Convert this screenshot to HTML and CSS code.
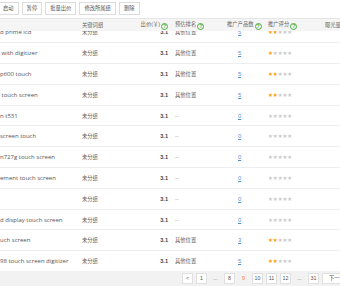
FILE: index.html
```html
<!DOCTYPE html>
<html lang="zh-CN">
<head>
<meta charset="utf-8">
<title>关键词管理</title>
<link rel="stylesheet" href="styles.css">
</head>
<body>
<div class="page">
  <div class="toolbar">
    <span class="btn btn-first">启动</span>
    <span class="btn">暂停</span>
    <span class="btn">批量出价</span>
    <span class="btn">修改所属组</span>
    <span class="btn">删除</span>
  </div>
  <div class="grid thead">
    <div></div>
    <div>关键词组</div>
    <div class="c-bid">出价(￥)<i class="q">?</i></div>
    <div class="c-rank">预估排名<i class="q">?</i></div>
    <div>推广产品数<i class="q">?</i></div>
    <div>推广评分<i class="q">?</i></div>
    <div>曝光量</div>
  </div>
  <div class="tbody">
    <div class="tbody-inner">
      <div class="grid row"><div class="kw">d prime lcd</div><div>未分组</div><div class="c-bid num">3.1</div><div class="c-rank">其他位置</div><div class="c-count"><a>5</a></div><div class="stars"><b>★★</b>★★★</div><div></div></div>
      <div class="grid row"><div class="kw"> with digitizer</div><div>未分组</div><div class="c-bid num">3.1</div><div class="c-rank">其他位置</div><div class="c-count"><a>5</a></div><div class="stars"><b>★</b>★★★★</div><div></div></div>
      <div class="grid row"><div class="kw">p600 touch</div><div>未分组</div><div class="c-bid num">3.1</div><div class="c-rank">其他位置</div><div class="c-count"><a>5</a></div><div class="stars"><b>★★</b>★★★</div><div></div></div>
      <div class="grid row"><div class="kw"> touch screen</div><div>未分组</div><div class="c-bid num">3.1</div><div class="c-rank">其他位置</div><div class="c-count"><a>5</a></div><div class="stars"><b>★★</b>★★★</div><div></div></div>
      <div class="grid row"><div class="kw">n t531</div><div>未分组</div><div class="c-bid num">3.1</div><div class="c-rank dash">--</div><div class="c-count"><a>0</a></div><div class="stars">★★★★★</div><div></div></div>
      <div class="grid row"><div class="kw">screen touch</div><div>未分组</div><div class="c-bid num">3.1</div><div class="c-rank dash">--</div><div class="c-count"><a>0</a></div><div class="stars">★★★★★</div><div></div></div>
      <div class="grid row"><div class="kw">n727g touch screen</div><div>未分组</div><div class="c-bid num">3.1</div><div class="c-rank dash">--</div><div class="c-count"><a>0</a></div><div class="stars">★★★★★</div><div></div></div>
      <div class="grid row"><div class="kw">ement touch screen</div><div>未分组</div><div class="c-bid num">3.1</div><div class="c-rank dash">--</div><div class="c-count"><a>0</a></div><div class="stars">★★★★★</div><div></div></div>
      <div class="grid row"><div class="kw"></div><div>未分组</div><div class="c-bid num">3.1</div><div class="c-rank dash">--</div><div class="c-count"><a>0</a></div><div class="stars">★★★★★</div><div></div></div>
      <div class="grid row"><div class="kw">d display touch screen</div><div>未分组</div><div class="c-bid num">3.1</div><div class="c-rank dash">--</div><div class="c-count"><a>0</a></div><div class="stars">★★★★★</div><div></div></div>
      <div class="grid row"><div class="kw">uch screen</div><div>未分组</div><div class="c-bid num">3.1</div><div class="c-rank">其他位置</div><div class="c-count"><a>3</a></div><div class="stars"><b>★★</b>★★★</div><div></div></div>
      <div class="grid row"><div class="kw">98 touch screen digitizer</div><div>未分组</div><div class="c-bid num">3.1</div><div class="c-rank">其他位置</div><div class="c-count"><a>5</a></div><div class="stars"><b>★★</b>★★★</div><div></div></div>
    </div>
  </div>
  <div class="pager">
    <span class="pg">&lt;</span>
    <span class="pg">1</span>
    <span class="pg pg-plain">...</span>
    <span class="pg">8</span>
    <span class="pg pg-plain pg-cur">9</span>
    <span class="pg">10</span>
    <span class="pg">11</span>
    <span class="pg">12</span>
    <span class="pg pg-plain">...</span>
    <span class="pg">31</span>
    <span class="pg pg-next">下一页</span>
  </div>
</div>
</body>
</html>
```

FILE: styles.css
```css
* { box-sizing: border-box; }
html, body { margin: 0; padding: 0; background: #fff; }
body {
  font-family: "Liberation Sans", "Noto Sans CJK SC", sans-serif;
  font-size: 5.3px;
  color: #666;
}
.page {
  width: 340px;
  height: 286px;
  overflow: hidden;
  display: flex;
  flex-direction: column;
}
.toolbar {
  height: 19px;
  flex: none;
  display: flex;
  gap: 3px;
  padding-top: 2px;
  border-bottom: 1px solid #e6e6e6;
  margin-left: -3px;
}
.btn {
  height: 13px;
  line-height: 11px;
  padding: 0 4px;
  border: 1px solid #dcdcdc;
  background: #fff;
  color: #555;
  white-space: nowrap;
}
.btn-first { padding-left: 5px; }
.grid {
  display: grid;
  grid-template-columns: 82px 48px 38px 59px 41px 57px 1fr;
  align-items: center;
  white-space: nowrap;
}
.thead {
  height: 12px;
  flex: none;
  background: #f5f5f5;
  color: #666;
  position: relative;
  z-index: 1;
}
.c-bid { text-align: right; }
.c-rank { padding-left: 7px; }
.q {
  display: inline-block;
  width: 7px;
  height: 7px;
  margin-left: 1px;
  border: 0.8px solid #4caf3a;
  border-radius: 50%;
  color: #4caf3a;
  font-style: normal;
  font-size: 5px;
  line-height: 5.6px;
  text-align: center;
  vertical-align: -1.5px;
  font-weight: bold;
}
.tbody {
  flex: 1;
  overflow: hidden;
}
.tbody-inner { margin-top: -8.5px; }
.row {
  height: 20.8px;
  border-bottom: 1px solid #eeeeee;
}
.kw {
  font-family: "Open Sans", "Noto Sans CJK SC", sans-serif;
  font-size: 6px;
  color: #555;
  white-space: pre;
  overflow: hidden;
}
.num { color: #444; font-weight: bold; font-size: 5.6px; }
.dash { color: #999; }
.c-count { padding-left: 11px; }
.c-count a {
  color: #4a94dd;
  text-decoration: underline;
  font-size: 5.8px;
}
.stars {
  font-family: "DejaVu Sans", sans-serif;
  font-size: 5.4px;
  color: #c8c8c8;
  letter-spacing: 0;
}
.stars b { font-weight: normal; color: #ff9a00; }
.pager {
  height: 15px;
  flex: none;
  background: #f2f2f2;
  display: flex;
  align-items: center;
  gap: 3px;
  padding-left: 182px;
  white-space: nowrap;
}
.pg {
  flex: none;
  width: 11px;
  height: 11px;
  line-height: 9px;
  text-align: center;
  background: #fff;
  border: 1px solid #e0e0e0;
  color: #555;
  font-size: 5.3px;
}
.pg-plain { background: transparent; border-color: transparent; }
.pg-cur { color: #ff7a2f; }
.pg-next { width: 30px; }
```
